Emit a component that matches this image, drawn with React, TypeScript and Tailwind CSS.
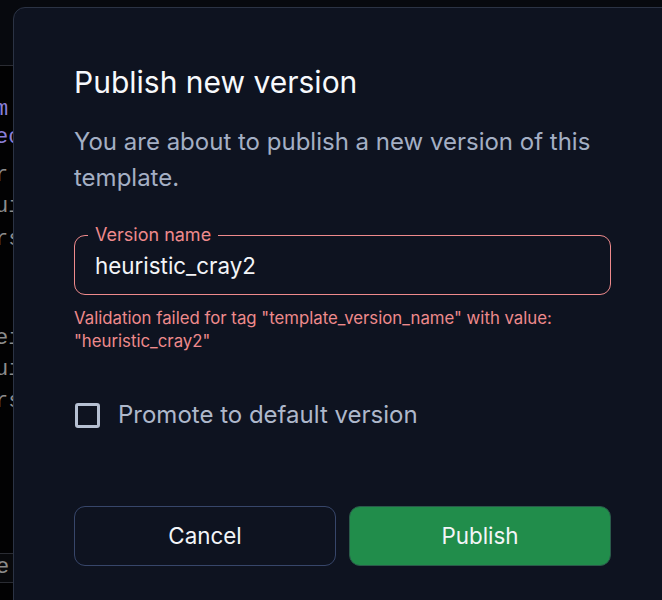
import React from "react";

const codeLines: { text: string; color: string; top: number }[] = [
  { text: "m", color: "#8a7fd8", top: 110 },
  { text: "ec", color: "#8a7fd8", top: 138 },
  { text: "r", color: "#8c8c8c", top: 176 },
  { text: "ui", color: "#8c8c8c", top: 207 },
  { text: "rs", color: "#8c8c8c", top: 240 },
  { text: "ei", color: "#8c8c8c", top: 339 },
  { text: "ui", color: "#8c8c8c", top: 370 },
  { text: "rs", color: "#8c8c8c", top: 402 },
];

export default function App() {
  return (
    <div
      className="relative w-[662px] h-[600px] overflow-hidden bg-[#020203]"
      style={{ fontFamily: "Inter, 'Noto Sans', sans-serif" }}
    >
      {/* background editor */}
      <div className="h-[66px] bg-[#07090e] border-b border-[#2a2c33]" />
      <div
        className="relative h-[487px] text-[22px] leading-[28px]"
        style={{ fontFamily: "'Liberation Mono', 'DejaVu Sans Mono', monospace" }}
      >
        {codeLines.map((l, i) => (
          <div
            key={i}
            className="absolute -left-[5px] whitespace-pre"
            style={{ top: l.top - 66 - 14, color: l.color }}
          >
            {l.text}
          </div>
        ))}
      </div>
      <div
        className="h-[30px] border-y border-[#2a2c33] bg-[#08090c] text-[22px] leading-[28px] text-[#8c8c8c] -ml-[4px]"
        style={{ fontFamily: "'Liberation Mono', 'DejaVu Sans Mono', monospace" }}
      >
        e
      </div>

      {/* dialog overlay */}
      <div className="absolute left-[13px] top-[7px] w-[680px] h-[640px] rounded-tl-[12px] border border-[#2b3344] bg-[#0e1320] pl-[60px] pt-[57px] pr-[81px]">
        <h2 className="text-[30px] leading-[34px] text-[#f7f9fc] font-normal">Publish new version</h2>
        <p className="mt-[25px] text-[24px] leading-[36px] text-[#a4afc4]">
          You are about to publish a new version of this template.
        </p>

        <div className="mt-[31px]">
          <fieldset className="relative h-[68px] rounded-[11px] border border-[#ee8a8c] px-[12px] pb-0 pt-0 m-0">
            <legend className="px-[7px] ml-[1px] text-[18px] leading-[16px] text-[#ee8a8c]">Version name</legend>
            <div className="absolute left-[20px] top-[3px] text-[22.4px] leading-[40px] text-[#f3f5f8]">
              heuristic_cray2
            </div>
          </fieldset>
          <p className="mt-[12px] text-[16.8px] leading-[23px] text-[#ee8a8c]">
            Validation failed for tag "template_version_name" with value: "heuristic_cray2"
          </p>
        </div>

        <label className="mt-[47px] flex items-center gap-[18px]">
          <span className="block w-[25px] h-[25px] ml-[1px] rounded-[3px] border-[3px] border-[#b6c0d2]" />
          <span className="text-[24px] leading-[30px] text-[#aeb8cb]">Promote to default version</span>
        </label>

        <div className="mt-[76px] grid grid-cols-2 gap-[13px]">
          <button className="h-[60px] rounded-[11px] border border-[#37466a] bg-transparent text-[22.4px] text-[#f3f5f8]">
            Cancel
          </button>
          <button className="h-[60px] rounded-[11px] border border-[#2a5a4a] bg-[#218d4b] text-[22.4px] text-[#f3f5f8]">
            Publish
          </button>
        </div>
      </div>
    </div>
  );
}
